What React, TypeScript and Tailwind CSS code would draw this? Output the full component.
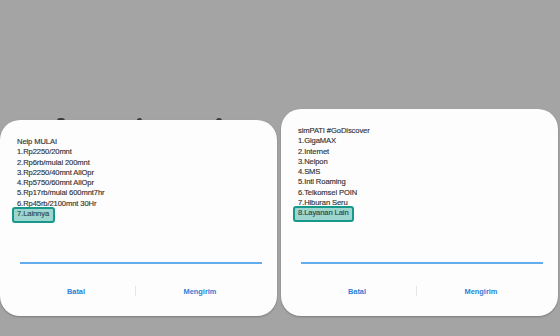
import React from "react";

const font = { fontFamily: '"Liberation Sans", Arial, sans-serif' };

function Card({
  lines,
  highlight,
  height,
  hlWidth,
}: {
  lines: string[];
  highlight: string;
  height: string;
  hlWidth: string;
}) {
  return (
    <div
      className={`relative z-10 flex w-[277px] flex-col rounded-[20px] bg-[#fdfdfd] shadow-[0_1px_2px_rgba(0,0,0,0.25)] ${height}`}
    >
      <div className="flex flex-col pl-[17px] pt-[17px] text-[7.6px] leading-[10.3px] tracking-[-0.1px] text-[#333333] [-webkit-text-stroke:0.15px_#333333]">
        {lines.map((l) => (
          <div key={l} className="whitespace-nowrap">
            {l}
          </div>
        ))}
        <div className="relative whitespace-nowrap">
          <span
            className={`absolute left-[-5px] top-[-2.5px] h-[16px] rounded-[3px] border-2 border-[#18988b] bg-[#9dd6ce] ${hlWidth}`}
          />
          <span className="relative text-[#2f4f4b]">{highlight}</span>
        </div>
      </div>
      <div className="flex-1" />
      <div className="ml-[20px] mr-[15px] h-[2px] bg-[#64acee]" />
      <div className="mb-[19px] ml-[17px] mt-[22px] flex items-center text-[7.4px] font-bold text-[#2c80d6]">
        <div className="flex w-[118px] justify-center">Batal</div>
        <div className="h-[10px] w-px bg-[#e6e6e6]" />
        <div className="flex w-[128px] justify-center">Mengirim</div>
      </div>
    </div>
  );
}

export default function App() {
  return (
    <div
      className="relative flex h-[336px] w-[560px] items-end gap-[4px] overflow-hidden bg-[#a4a4a4] pb-[20px]"
      style={font}
    >
      <div className="absolute left-[57px] top-[118px] h-[3px] w-[8px] rounded-t-sm bg-[#3a3a3a]" />
      <div className="absolute left-[137px] top-[118px] h-[3px] w-[5px] rounded-t-full bg-[#3a3a3a]" />
      <div className="absolute left-[216px] top-[118px] h-[3px] w-[6px] rounded-t-full bg-[#3a3a3a]" />
      <Card
        height="h-[196px]"
        hlWidth="w-[43px]"
        lines={[
          "Nelp MULAI",
          "1.Rp2250/20mnt",
          "2.Rp6rb/mulai 200mnt",
          "3.Rp2250/40mnt AllOpr",
          "4.Rp5750/60mnt AllOpr",
          "5.Rp17rb/mulai 600mnt7hr",
          "6.Rp45rb/2100mnt 30Hr",
        ]}
        highlight="7.Lainnya"
      />
      <Card
        height="h-[207px]"
        hlWidth="w-[61px]"
        lines={[
          "simPATI #GoDiscover",
          "1.GigaMAX",
          "2.Internet",
          "3.Nelpon",
          "4.SMS",
          "5.Intl Roaming",
          "6.Telkomsel POIN",
          "7.Hiburan Seru",
        ]}
        highlight="8.Layanan Lain"
      />
    </div>
  );
}
